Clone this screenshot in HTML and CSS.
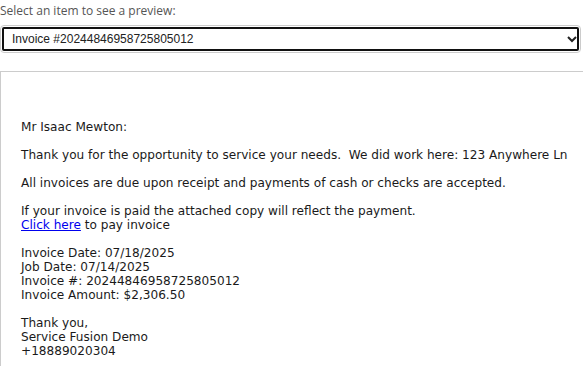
FILE: index.html
```html
<!DOCTYPE html>
<html lang="en">
<head>
    <meta charset="UTF-8">
    <title>Invoice Preview</title>
    <link rel="stylesheet" href="styles.css">
</head>
<body>

<div class="picker">
    <label for="itemSelect">Select an item to see a preview:</label>
    <select id="itemSelect" class="item-select">
        <option>Invoice #20244846958725805012</option>
    </select>
</div>

<div class="preview">
    <p>Mr Isaac Mewton:</p>
    <p>Thank you for the opportunity to service your needs.&nbsp; We did work here: 123 Anywhere Ln</p>
    <p>All invoices are due upon receipt and payments of cash or checks are accepted.</p>
    <p>If your invoice is paid the attached copy will reflect the payment.<br>
        <a href="#">Click here</a> to pay invoice</p>
    <p>Invoice Date: 07/18/2025<br>
        Job Date: 07/14/2025<br>
        Invoice #: 20244846958725805012<br>
        Invoice Amount: $2,306.50</p>
    <p class="sign-off">Thank you,<br>
        Service Fusion Demo<br>
        +18889020304</p>
</div>

</body>
</html>
```

FILE: styles.css
```css
body {
    margin: 0;
    padding: 0;
    background: #fff;
    overflow: hidden;
}

.picker {
    padding: 4px 0 0 0;
}

.picker label {
    display: block;
    font-family: 'Open Sans', sans-serif;
    font-size: 12px;
    line-height: 14px;
    color: #555;
    margin-bottom: 7px;
}

.item-select {
    display: block;
    width: 581px;
    height: 28px;
    margin: 0;
    padding: 0 0 0 7px;
    font-family: 'Liberation Sans', Arial, sans-serif;
    font-size: 12px;
    color: #222;
    background: #fff;
    border: 1px solid #ccc;
    border-radius: 4px;
    outline: 2px solid #111;
    outline-offset: -4px;
}

.preview {
    margin-top: 18px;
    height: 295px;
    box-sizing: border-box;
    border-top: 1px solid #ccc;
    border-left: 1px solid #ccc;
    padding: 48px 0 0 20px;
    font-family: 'DejaVu Sans', Verdana, sans-serif;
    font-size: 12.1px;
    line-height: 14px;
    color: #1a1a1a;
}

.preview p {
    margin: 0 0 14px 0;
}

.preview .sign-off {
    margin-bottom: 0;
}

.preview a {
    color: #0000ee;
}
```
